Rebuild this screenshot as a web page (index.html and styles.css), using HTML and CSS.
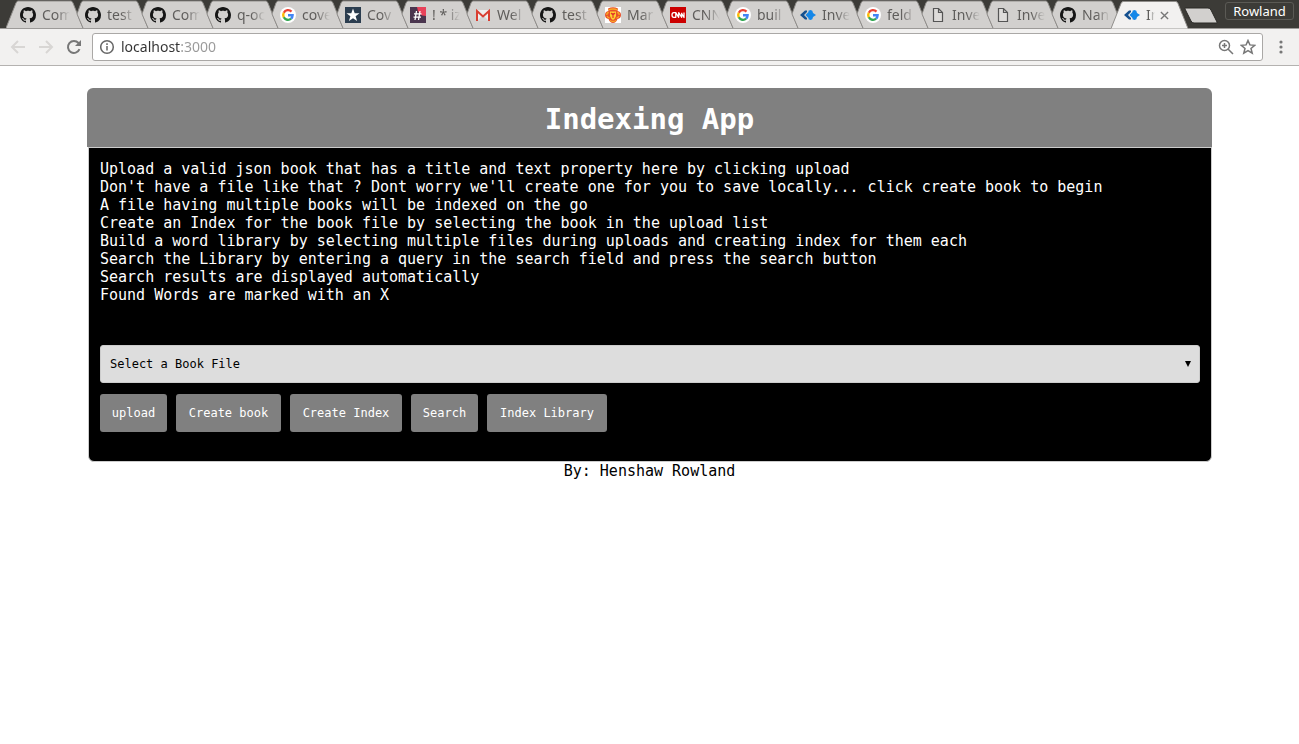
FILE: index.html
```html
<!DOCTYPE html>
<html lang="en">
<head>
<meta charset="utf-8">
<title>Indexing App</title>
<link rel="stylesheet" href="styles.css">
</head>
<body>
<svg class="defs" aria-hidden="true">
  <symbol id="tab-full" viewBox="0 0 78 28"><path class="tab-fill" d="M0 28 10 3Q11 1 12 1H65Q66 1 67 3L77 28Z"/><path class="tab-edge" d="M0 28 10 3Q11 1 12 1H65Q66 1 67 3L77 28"/></symbol>
  <symbol id="tab" viewBox="0 0 78 28"><path class="tab-fill" d="M12 28 6 14 10 3Q11 1 12 1H65Q66 1 67 3L77 28Z"/><path class="tab-edge" d="M12 28 6 14 10 3Q11 1 12 1H65Q66 1 67 3L77 28"/></symbol>
  <symbol id="github" viewBox="0 0 16 16"><path fill="#161616" d="M8 0C3.580 0 0 3.580 0 8c0 3.540 2.290 6.530 5.470 7.590.4.070.55-.17.55-.38 0-.19-.01-.82-.01-1.490-2.010.37-2.530-.49-2.690-.94-.09-.23-.48-.94-.82-1.130-.28-.15-.68-.52-.01-.53.63-.01 1.080.58 1.230.82.72 1.210 1.870.87 2.330.66.07-.52.28-.87.51-1.070-1.780-.2-3.640-.89-3.640-3.950 0-.87.31-1.590.82-2.150-.08-.2-.36-1.020.08-2.120 0 0 .67-.21 2.200.82.64-.18 1.320-.27 2-.27s1.360.09 2 .27c1.530-1.040 2.200-.82 2.200-.82.44 1.100.16 1.920.08 2.120.51.56.82 1.270.82 2.150 0 3.070-1.870 3.750-3.650 3.950.29.25.54.73.54 1.480 0 1.070-.01 1.930-.01 2.200 0 .21.15.46.55.38A8 8 0 0 0 16 8c0-4.420-3.580-8-8-8z"/></symbol>
  <symbol id="google" viewBox="0 0 16 16"><circle cx="8" cy="8" r="8" fill="#fff"/><g fill="none" stroke-width="2.400"><path stroke="#ea4335" d="M11.500 4.600A4.800 4.800 0 0 0 3.800 5.700"/><path stroke="#fbbc05" d="M3.800 5.700a4.800 4.800 0 0 0 0 4.600"/><path stroke="#34a853" d="M3.800 10.300a4.800 4.800 0 0 0 7.300 1.400"/><path stroke="#4285f4" d="M11.100 11.700A4.800 4.800 0 0 0 12.600 8.300H8"/></g></symbol>
  <symbol id="star" viewBox="0 0 16 16"><path fill="#2b3d4f" d="M0 0h16v16H0z"/><path fill="#fff" d="m8 1.500 1.700 4.700h4.800l-3.900 3 1.500 4.800L8 11.200 3.900 14l1.500-4.800-3.900-3h4.800z"/></symbol>
  <symbol id="hash" viewBox="0 0 16 16"><path fill="#4a354e" d="M0 0h16v16H0z"/><path fill="#e8425a" d="M7 0h9v9Q8 9 7 0z"/><path fill="none" stroke="#fff" stroke-width="1.300" d="m6.500 4-1.500 9M10 4 8.500 13M4 6.800h7.500M3.500 10.200H11"/></symbol>
  <symbol id="gmail" viewBox="0 0 16 16"><path fill="#eee" d="M1 3h14v11H1z"/><path fill="#d5d5d5" d="m2 14 6-6 6 6z"/><path fill="none" stroke="#d93f32" stroke-width="2" d="M2 14V4l6 5.500L14 4v10"/></symbol>
  <symbol id="united" viewBox="0 0 16 16"><path fill="#fff" d="M0 0h16v16H0z"/><path fill="#e8502b" d="M3 1.500Q8-1 13 1.500L12.500 4Q16 4.500 16 8t-3.500 4Q11 16 8 16t-4.500-4Q0 11.500 0 8t3.500-4z"/><path fill="none" stroke="#f9a825" stroke-width="1.300" d="M3.500 3q4.500-2 9 0M1.800 8q0-2.500 2-2.500M14.200 8q0-2.500-2-2.500M2 9q1 2 2.500 2M14 9q-1 2-2.500 2M5 13.500q3 2 6 0"/><path fill="#ffcf30" d="M5 4.500h6V9q-1 3-3 4-2-1-3-4z"/><path fill="none" stroke="#e5352b" stroke-width="1.200" d="M8 6v5M6 6l2 2 2-2"/></symbol>
  <symbol id="cnn" viewBox="0 0 16 16"><path fill="#c00" d="M0 0h16v16H0z"/><path fill="none" stroke="#fff" stroke-width="1.300" stroke-linejoin="round" d="M5.500 5.700H3.800Q2 5.700 2 8t1.800 2.300h2V5.700l2.900 4.600V5.700l3 4.600V5.700M14 5.500v5l-2.300-4"/></symbol>
  <symbol id="arrows" viewBox="0 0 16 16"><path fill="#14508f" d="M0 8 5 3.500h2V5L4 8l3 3v1.500H5z"/><path fill="#1487e8" d="m5.500 8 3-3V3.800l2-.8 1.800.8.700 2.200L16 8l-3 2-.7 2.200-1.800.8-2-.8V11z"/></symbol>
  <symbol id="file" viewBox="0 0 16 16"><path fill="#dedcda" stroke="#555" stroke-width="1.200" d="M3.500 1.500h5l4 4v9h-9zM8.500 1.500v4h4"/></symbol>
</svg>
<header class="browser">
  <div class="strip">
    <ul class="tabs">
      <li class="tab"><svg class="shape"><use href="#tab-full"/></svg><svg class="icon"><use href="#github"/></svg><span class="label">Com</span></li>
      <li class="tab"><svg class="shape"><use href="#tab"/></svg><svg class="icon"><use href="#github"/></svg><span class="label">test</span></li>
      <li class="tab"><svg class="shape"><use href="#tab"/></svg><svg class="icon"><use href="#github"/></svg><span class="label">Com</span></li>
      <li class="tab"><svg class="shape"><use href="#tab"/></svg><svg class="icon"><use href="#github"/></svg><span class="label">q-oc</span></li>
      <li class="tab"><svg class="shape"><use href="#tab"/></svg><svg class="icon"><use href="#google"/></svg><span class="label">cove</span></li>
      <li class="tab"><svg class="shape"><use href="#tab"/></svg><svg class="icon"><use href="#star"/></svg><span class="label">Cov</span></li>
      <li class="tab"><svg class="shape"><use href="#tab"/></svg><svg class="icon"><use href="#hash"/></svg><span class="label">! * iz</span></li>
      <li class="tab"><svg class="shape"><use href="#tab"/></svg><svg class="icon"><use href="#gmail"/></svg><span class="label">Wel</span></li>
      <li class="tab"><svg class="shape"><use href="#tab"/></svg><svg class="icon"><use href="#github"/></svg><span class="label">test</span></li>
      <li class="tab"><svg class="shape"><use href="#tab"/></svg><svg class="icon"><use href="#united"/></svg><span class="label">Mar</span></li>
      <li class="tab"><svg class="shape"><use href="#tab"/></svg><svg class="icon"><use href="#cnn"/></svg><span class="label">CNN</span></li>
      <li class="tab"><svg class="shape"><use href="#tab"/></svg><svg class="icon"><use href="#google"/></svg><span class="label">buil</span></li>
      <li class="tab"><svg class="shape"><use href="#tab"/></svg><svg class="icon"><use href="#arrows"/></svg><span class="label">Inve</span></li>
      <li class="tab"><svg class="shape"><use href="#tab"/></svg><svg class="icon"><use href="#google"/></svg><span class="label">feld</span></li>
      <li class="tab"><svg class="shape"><use href="#tab"/></svg><svg class="icon"><use href="#file"/></svg><span class="label">Inve</span></li>
      <li class="tab"><svg class="shape"><use href="#tab"/></svg><svg class="icon"><use href="#file"/></svg><span class="label">Inve</span></li>
      <li class="tab"><svg class="shape"><use href="#tab"/></svg><svg class="icon"><use href="#github"/></svg><span class="label">Nan</span></li>
      <li class="tab active"><svg class="shape"><use href="#tab-full"/></svg><svg class="icon"><use href="#arrows"/></svg><span class="label">In</span><button class="close" aria-label="Close tab"><svg viewBox="0 0 10 10"><path d="m1 1 8 8M9 1 1 9"/></svg></button></li>
    </ul>
    <button class="new-tab" aria-label="New tab"><svg viewBox="0 0 34 17"><path d="M2 1h22q2 0 3 2l6 12q1 1-1 1H10q-2 0-3-2L1 2q-1-1 1-1z"/></svg></button>
    <button class="profile">Rowland</button>
  </div>
  <div class="toolbar">
    <button class="nav off" aria-label="Back"><svg viewBox="0 0 16 16"><path d="M15 8H2M8 2 2 8l6 6"/></svg></button>
    <button class="nav off" aria-label="Forward"><svg viewBox="0 0 16 16"><path d="M1 8h13M8 2l6 6-6 6"/></svg></button>
    <button class="nav" aria-label="Reload"><svg viewBox="0 0 16 16"><path d="M13.500 10.200A6 6 0 1 1 12.500 4l1.500 1.500"/><path class="solid" d="M15 1v6H9z"/></svg></button>
    <div class="omnibox">
      <svg class="info" viewBox="0 0 16 16"><circle cx="8" cy="8" r="6.300"/><path d="M8 7v4.500M8 4.200V6"/></svg>
      <input class="url" type="text" aria-label="Address" value="localhost:3000">
      <button class="tool" aria-label="Zoom"><svg viewBox="0 0 16 16"><circle cx="6.500" cy="6.500" r="5"/><path d="m10 10 5 5M4 6.500h5M6.500 4v5"/></svg></button>
      <button class="tool" aria-label="Bookmark"><svg viewBox="0 0 16 16"><path d="m8 1.500 1.900 4.400 4.800.4L11 9.500l1.200 4.700L8 11.700l-4.200 2.500L5 9.500 1.300 6.300l4.800-.4z"/></svg></button>
    </div>
    <button class="menu" aria-label="Menu"><svg viewBox="0 0 4 16"><circle cx="2" cy="3" r="1.600"/><circle cx="2" cy="8" r="1.600"/><circle cx="2" cy="13" r="1.600"/></svg></button>
  </div>
</header>
<main class="app">
  <h1 class="title">Indexing App</h1>
  <section class="panel">
    <p class="help">Upload a valid json book that has a title and text property here by clicking upload<br>
Don't have a file like that ? Dont worry we'll create one for you to save locally... click create book to begin<br>
A file having multiple books will be indexed on the go<br>
Create an Index for the book file by selecting the book in the upload list<br>
Build a word library by selecting multiple files during uploads and creating index for them each<br>
Search the Library by entering a query in the search field and press the search button<br>
Search results are displayed automatically<br>
Found Words are marked with an X</p>
    <div class="picker">
      <select class="books" aria-label="Book file"><option>Select a Book File</option></select>
      <svg class="caret" viewBox="0 0 6 6"><path d="M0 0h6L3 6z"/></svg>
    </div>
    <div class="actions">
      <button class="action short">upload</button>
      <button class="action book">Create book</button>
      <button class="action index">Create Index</button>
      <button class="action short">Search</button>
      <button class="action library">Index Library</button>
    </div>
  </section>
  <footer class="credit">By: Henshaw Rowland</footer>
</main>
</body>
</html>
```
FILE: styles.css
```css
* { box-sizing: border-box; }
body { margin: 0; background: #fff; color: #000; font-family: "DejaVu Sans Mono", monospace; font-size: 15px; line-height: 18px; }
button { padding: 0; border: 0; background: none; font: inherit; }
button svg { display: block; width: 100%; height: 100%; }
.defs { position: absolute; width: 0; height: 0; }

.browser { font-family: "Noto Sans", sans-serif; font-size: 14px; background: #f2f1f0; }
.strip { display: flex; height: 29px; padding-left: 6px; background: #3c3b37; border-bottom: 1px solid #9c9a98; }
.tabs { display: flex; margin: 0; padding: 0; list-style: none; }
.tab { position: relative; display: flex; align-items: center; gap: 6px; width: 65px; height: 28px; padding: 2px 0 0 14px; color: #5f5d5b; }
.tab .shape { position: absolute; left: 0; top: 0; width: 78px; height: 28px; fill: #d2d0ce; }
.tab-edge { fill: none; stroke: #8f8d8a; stroke-width: 1; }
.icon { position: relative; flex: none; width: 16px; height: 16px; }
.label { position: relative; flex: none; width: 32px; overflow: hidden; white-space: nowrap; -webkit-mask-image: linear-gradient(90deg, #000 14px, transparent 28px); mask-image: linear-gradient(90deg, #000 14px, transparent 28px); }
.active { z-index: 2; height: 29px; padding: 1px 0 0 13px; }
.active .shape { height: 29px; fill: #f2f1f0; }
.active .label { width: 14px; margin-right: -6px; -webkit-mask-image: linear-gradient(90deg, #000 3px, transparent 9px); mask-image: linear-gradient(90deg, #000 3px, transparent 9px); }
.close { position: relative; width: 9px; height: 9px; stroke: #777; stroke-width: 1.500; fill: none; flex: none; }
.new-tab { width: 34px; height: 17px; margin: 7px 0 0 8px; fill: #d2d0ce; stroke: #2b2a27; }
.profile { width: 69px; height: 18px; margin: 2px 5px 0 auto; border: 1px solid #5b5a55; border-radius: 3px; color: #fff; font-size: 13px; line-height: 16px; }

.toolbar { display: flex; align-items: center; height: 37px; padding: 0 10px; border-bottom: 1px solid #b4b2b0; }
.nav { width: 16px; height: 16px; margin-right: 12px; fill: none; stroke: #777; stroke-width: 2; }
.nav.off { stroke: #d8d6d4; }
.nav:nth-child(3) { margin-right: 10px; }
.solid { fill: #777; stroke: none; }
.omnibox { flex: 1; display: flex; align-items: center; gap: 6px; height: 28px; margin-right: 16px; padding: 0 6px; background: #fff; border: 1px solid #aaa8a6; border-radius: 3px; }
.info { width: 16px; height: 16px; fill: none; stroke: #666; stroke-width: 1.500; }
.url { flex: 1; min-width: 0; padding: 0; border: 0; outline: 0; font: inherit; background: linear-gradient(90deg, #333 59px, #999 59px); -webkit-background-clip: text; background-clip: text; -webkit-text-fill-color: transparent; }
.tool { width: 16px; height: 16px; fill: none; stroke: #777; stroke-width: 1.500; }
.menu { width: 4px; height: 16px; margin-right: 6px; fill: #777; }

.app { margin: 22px 87px 0; }
.title { margin: 0; padding: 13px 0 10px; border-radius: 6px 6px 0 0; background: #808080; color: #fff; font-size: 29px; line-height: 36px; text-align: center; }
.panel { margin: 0 0 0 1px; padding: 12px 11px 29px; background: #000; border: 1px solid #ccc; border-radius: 0 0 6px 6px; color: #fff; }
.help { margin: 0 0 41px; }
.picker { position: relative; }
.books { display: block; width: 100%; height: 38px; padding: 0 9px; appearance: none; background: #ddd; border: 1px solid #ccc; border-radius: 3px; color: #000; font-family: inherit; font-size: 12px; }
.caret { position: absolute; right: 9px; top: 16px; width: 6px; height: 6px; }
.actions { display: flex; flex-wrap: wrap; gap: 9px; margin-top: 11px; }
.action { height: 38px; border-radius: 3px; background: #808080; color: #fff; font-size: 12px; }
.short { width: 67px; }
.book { width: 105px; }
.index { width: 112px; }
.library { width: 120px; }
.credit { text-align: center; }
```
